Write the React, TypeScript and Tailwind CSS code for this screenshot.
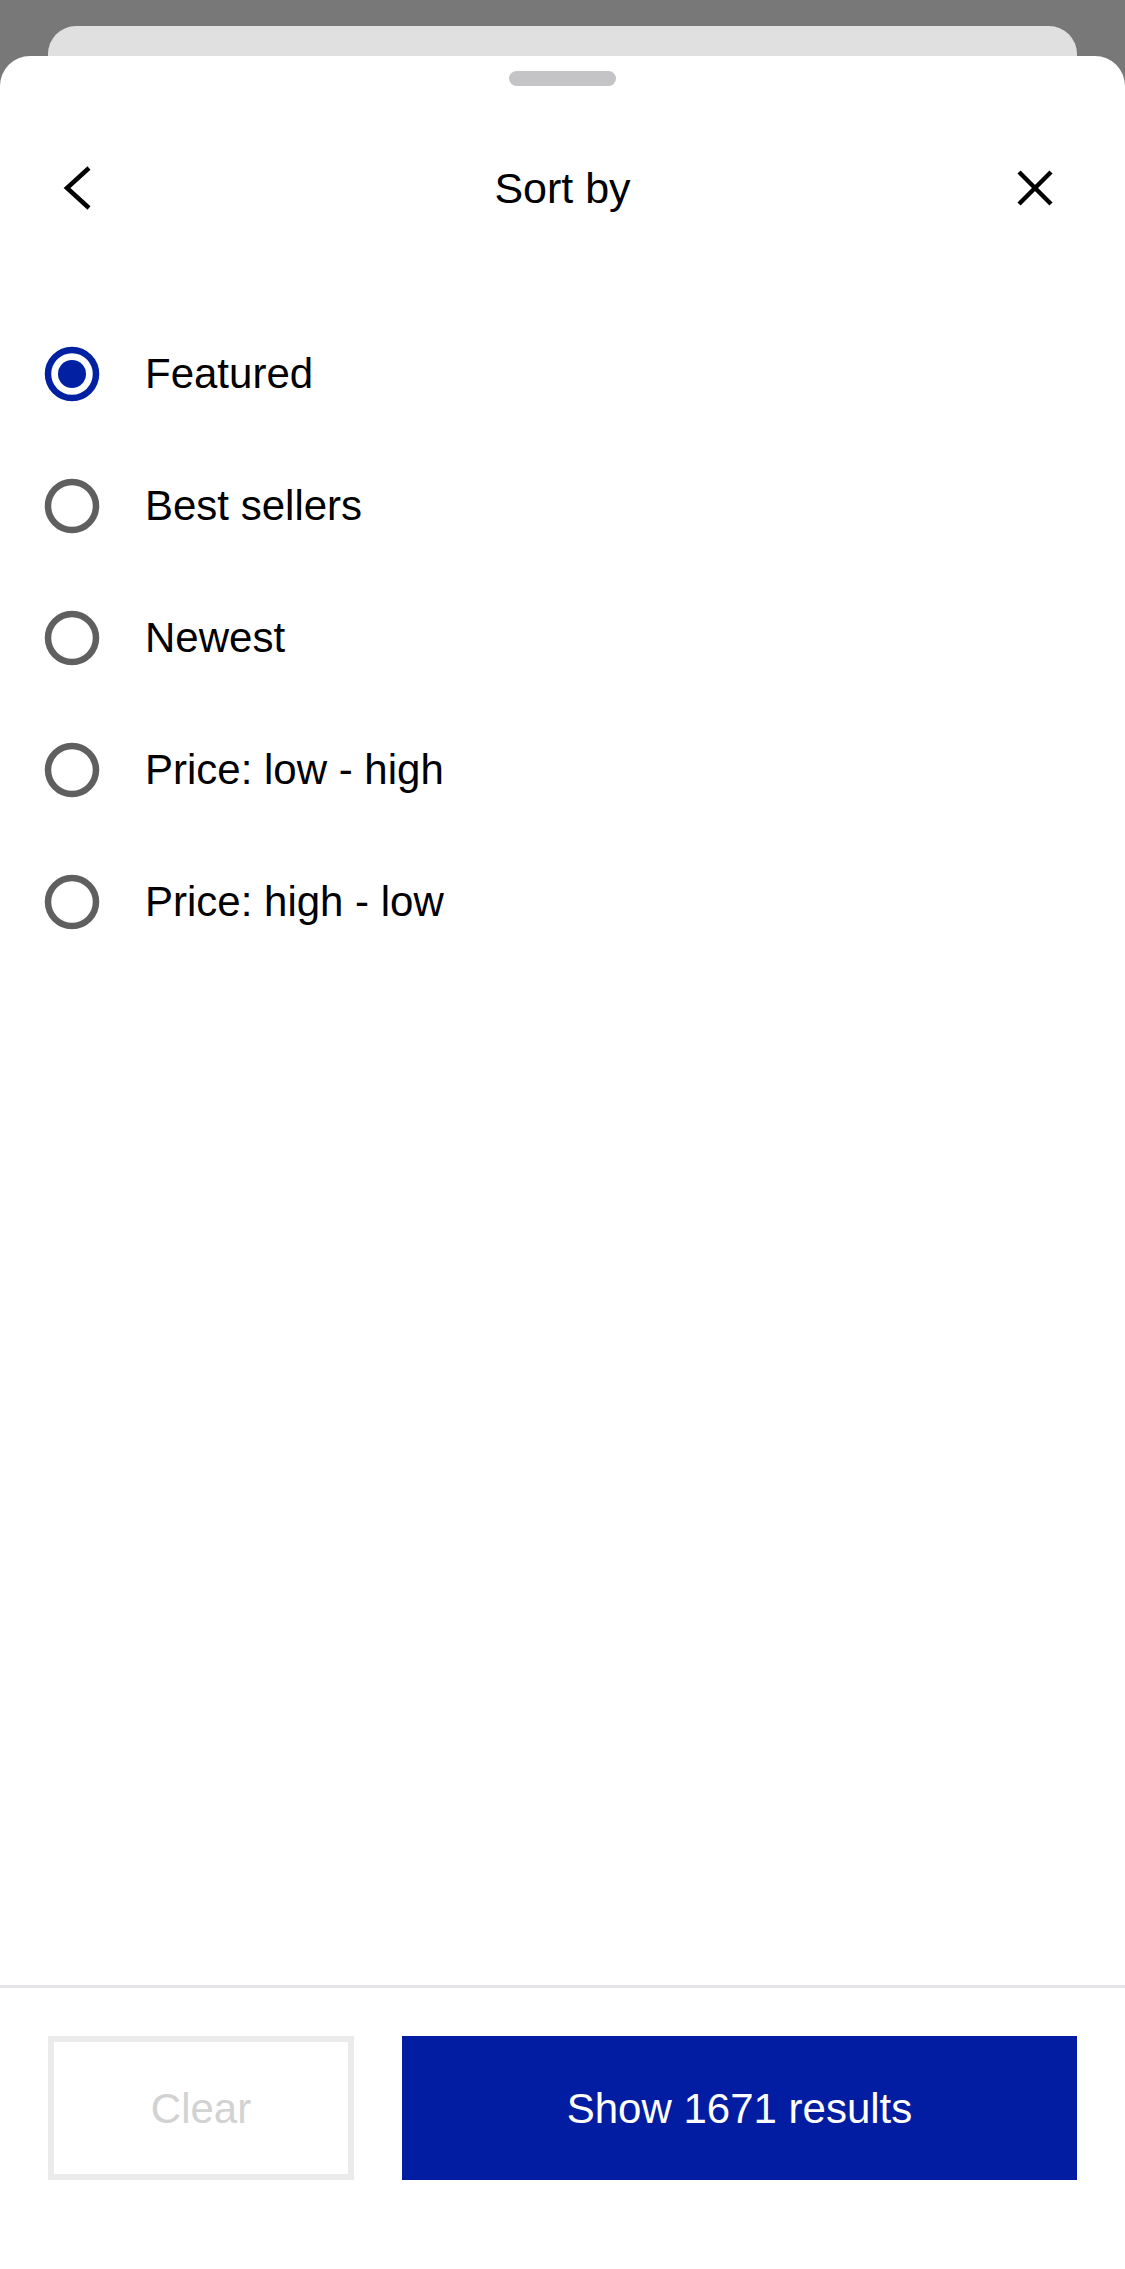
import React from "react";

const options = ["Featured", "Best sellers", "Newest", "Price: low - high", "Price: high - low"];

function Radio({ checked }: { checked: boolean }) {
  return (
    <svg width="56" height="56" viewBox="0 0 56 56" className="shrink-0">
      <circle cx="28" cy="28" r="24" fill="none" stroke={checked ? "#0220a2" : "#5f5f5f"} strokeWidth="6.5" />
      {checked && <circle cx="28" cy="28" r="14" fill="#0220a2" />}
    </svg>
  );
}

export default function App() {
  return (
    <div
      className="w-[1125px] h-[2269px] bg-[#787878] flex flex-col overflow-hidden"
      style={{ fontFamily: '"Liberation Sans", Arial, sans-serif' }}
    >
      <div className="pt-[26px] px-[48px]">
        <div className="h-[30px] bg-[#e0e0e0] rounded-t-[28px]" />
      </div>
      <div className="flex-1 bg-white rounded-t-[30px] flex flex-col">
        <div className="mt-[15px] mx-auto w-[107px] h-[15px] rounded-full bg-[#c4c4c6]" />
        <div className="mt-[42px] h-[120px] flex items-center justify-between px-[60px] relative">
          <svg width="36" height="48" viewBox="0 0 36 48">
            <path d="M29 4 L7 24 L29 44" fill="none" stroke="#000" strokeWidth="4.5" strokeLinecap="butt" strokeLinejoin="miter" />
          </svg>
          <div className="absolute left-0 right-0 text-center text-[43px] text-black pointer-events-none leading-none">
            Sort by
          </div>
          <svg width="48" height="48" viewBox="0 0 48 48" className="mr-[6px]">
            <path d="M8 8 L40 40 M40 8 L8 40" fill="none" stroke="#000" strokeWidth="4.5" />
          </svg>
        </div>
        <div className="mt-[60px] flex flex-col">
          {options.map((o, i) => (
            <div key={o} className="h-[132px] flex items-center pl-[44px] gap-[45px]">
              <Radio checked={i === 0} />
              <span className="text-[42px] text-black leading-none">{o}</span>
            </div>
          ))}
        </div>
        <div className="flex-1" />
        <div className="border-t-[3px] border-[#e4e4e8] pt-[48px] pb-[89px] px-[48px] flex gap-[48px]">
          <button className="w-[306px] h-[144px] border-[6px] border-[#ebebeb] bg-white text-[42px] text-[#d2d2d2] flex items-center justify-center">
            Clear
          </button>
          <button className="flex-1 h-[144px] bg-[#021ca2] text-white text-[42px] flex items-center justify-center">
            Show 1671 results
          </button>
        </div>
      </div>
    </div>
  );
}
